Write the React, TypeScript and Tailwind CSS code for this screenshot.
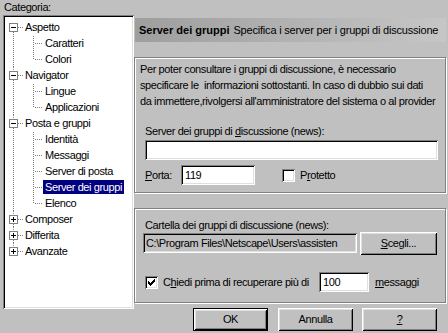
import React from 'react';

const sunken =
  'shadow-[inset_1px_1px_0_#808080,inset_-1px_-1px_0_#ffffff,inset_2px_2px_0_#000000,inset_-2px_-2px_0_#dfdfdf]';
const raised =
  'shadow-[inset_1px_1px_0_#ffffff,inset_-1px_-1px_0_#000000,inset_2px_2px_0_#dfdfdf,inset_-2px_-2px_0_#808080]';
const raisedDefault =
  'shadow-[inset_0_0_0_1px_#000000,inset_2px_2px_0_#ffffff,inset_-2px_-2px_0_#000000,inset_3px_3px_0_#dfdfdf,inset_-3px_-3px_0_#808080]';
const etched = 'border border-[#808080] shadow-[inset_1px_1px_0_#ffffff,1px_1px_0_#ffffff]';

type Item = {
  label: string;
  level: 0 | 1;
  box?: '+' | '-';
  first?: boolean;
  lastRoot?: boolean;
  lastChild?: boolean;
  selected?: boolean;
};

const items: Item[] = [
  { label: 'Aspetto', level: 0, box: '-', first: true },
  { label: 'Caratteri', level: 1 },
  { label: 'Colori', level: 1, lastChild: true },
  { label: 'Navigator', level: 0, box: '-' },
  { label: 'Lingue', level: 1 },
  { label: 'Applicazioni', level: 1, lastChild: true },
  { label: 'Posta e gruppi', level: 0, box: '-' },
  { label: 'Identità', level: 1 },
  { label: 'Messaggi', level: 1 },
  { label: 'Server di posta', level: 1 },
  { label: 'Server dei gruppi', level: 1, selected: true },
  { label: 'Elenco', level: 1, lastChild: true },
  { label: 'Composer', level: 0, box: '+' },
  { label: 'Differita', level: 0, box: '+' },
  { label: 'Avanzate', level: 0, box: '+', lastRoot: true },
];

const DOT = '#808080';

function Gutter({ it }: { it: Item }) {
  const w = it.level === 0 ? 18 : 38;
  return (
    <svg width={w} height={16} shapeRendering="crispEdges" className="shrink-0">
      {it.level === 0 ? (
        <>
          {!it.first && <line x1={8.5} y1={0} x2={8.5} y2={4} stroke={DOT} strokeDasharray="1 1" />}
          {!it.lastRoot && <line x1={8.5} y1={13} x2={8.5} y2={16} stroke={DOT} strokeDasharray="1 1" />}
          <line x1={13} y1={8.5} x2={18} y2={8.5} stroke={DOT} strokeDasharray="1 1" />
          <rect x={4.5} y={4.5} width={8} height={8} fill="#ffffff" stroke="#808080" />
          <line x1={6} y1={8.5} x2={11} y2={8.5} stroke="#000000" />
          {it.box === '+' && <line x1={8.5} y1={6} x2={8.5} y2={11} stroke="#000000" />}
        </>
      ) : (
        <>
          <line x1={8.5} y1={1} x2={8.5} y2={16} stroke={DOT} strokeDasharray="1 1" />
          <line x1={28.5} y1={1} x2={28.5} y2={it.lastChild ? 9 : 16} stroke={DOT} strokeDasharray="1 1" />
          <line x1={30} y1={8.5} x2={38} y2={8.5} stroke={DOT} strokeDasharray="1 1" />
        </>
      )}
    </svg>
  );
}

function U({ children }: { children: React.ReactNode }) {
  return <span className="underline underline-offset-[1px]">{children}</span>;
}

function Checkbox({ checked }: { checked?: boolean }) {
  return (
    <div className={`w-[13px] h-[13px] bg-white shrink-0 relative ${sunken}`}>
      {checked && (
        <svg width={13} height={13} className="absolute left-0 top-0" shapeRendering="crispEdges">
          <g fill="#000000">
            <rect x={9} y={3} width={1} height={1} />
            <rect x={8} y={4} width={2} height={1} />
            <rect x={3} y={5} width={1} height={1} />
            <rect x={7} y={5} width={3} height={1} />
            <rect x={3} y={6} width={2} height={1} />
            <rect x={6} y={6} width={3} height={1} />
            <rect x={3} y={7} width={5} height={1} />
            <rect x={4} y={8} width={3} height={1} />
            <rect x={5} y={9} width={1} height={1} />
          </g>
        </svg>
      )}
    </div>
  );
}

function Btn({ children, def, w = 'w-[75px]' }: { children: React.ReactNode; def?: boolean; w?: string }) {
  return (
    <div
      className={`${w} h-[23px] bg-[#c0c0c0] flex items-center justify-center shrink-0 ${def ? raisedDefault : raised}`}
    >
      {children}
    </div>
  );
}

export default function App() {
  return (
    <div className="w-[448px] h-[333px] bg-[#c0c0c0] overflow-hidden flex text-[11px] text-black font-['Liberation_Sans',Arial,sans-serif] tracking-[-0.4px] select-none">
      {/* Left column */}
      <div className="w-[134px] flex flex-col shrink-0">
        <div className="h-[15px] pl-[4px] leading-[14px]">Categoria:</div>
        <div className={`ml-[3px] w-[131px] h-[294px] bg-white pt-[4px] pl-[2px] ${sunken}`}>
          {items.map((it) => (
            <div key={it.label} className="h-[16px] flex items-center">
              <Gutter it={it} />
              <span
                className={`px-[2px] h-[14px] leading-[14px] whitespace-nowrap ${
                  it.selected ? 'bg-[#000080] text-white' : ''
                }`}
              >
                {it.label}
              </span>
            </div>
          ))}
        </div>
      </div>

      {/* Right column */}
      <div className="w-[314px] flex flex-col">
        <div className="mt-[18px] ml-[1px] w-[311px] h-[24px] flex items-center pl-[4px] bg-linear-to-r from-[#9e9e9e] to-[#c6c6c6] whitespace-nowrap">
          <span className="font-bold tracking-normal">Server dei gruppi</span>
          <span className="ml-[4px] tracking-[-0.2px]">Specifica i server per i gruppi di discussione</span>
        </div>

        {/* Group 1 */}
        <div className={`mt-[15px] w-[312px] h-[136px] flex flex-col ${etched}`}>
          <div className="mt-[3px] ml-[5px] leading-[16px] whitespace-pre">
            {'Per poter consultare i gruppi di discussione, è necessario\nspecificare le  informazioni sottostanti. In caso di dubbio sui dati\nda immettere,rivolgersi all\'amministratore del sistema o al provider'}
          </div>
          <div className="mt-[15px] ml-[10px] leading-[14px]">
            Server dei gruppi di <U>d</U>iscussione (news):
          </div>
          <div className={`mt-[2px] ml-[10px] w-[293px] h-[20px] bg-white ${sunken}`} />
          <div className="mt-[5px] ml-[10px] h-[20px] flex items-center">
            <span className="w-[36px]">
              <U>P</U>orta:
            </span>
            <div className={`w-[74px] h-[20px] bg-white flex items-center pl-[4px] ${sunken}`}>119</div>
            <div className="ml-[27px]">
              <Checkbox />
            </div>
            <span className="ml-[5px]">
              P<U>r</U>otetto
            </span>
          </div>
        </div>

        {/* Group 2 */}
        <div className={`mt-[15px] w-[312px] h-[95px] flex flex-col ${etched}`}>
          <div className="mt-[9px] ml-[10px] leading-[14px]">
            Cartella dei <U>g</U>ruppi di discussione (news):
          </div>
          <div className="mt-[-1px] ml-[8px] h-[24px] flex items-center">
            <div
              className={`w-[214px] h-[20px] bg-[#c0c0c0] flex items-center pl-[3px] overflow-hidden whitespace-nowrap ${sunken}`}
            >
              C:\Program Files\Netscape\Users\assisten
            </div>
            <div className="ml-[3px]">
              <Btn w="w-[77px]">
                <span>
                  <U>S</U>cegli...
                </span>
              </Btn>
            </div>
          </div>
          <div className="mt-[17px] ml-[10px] h-[20px] flex items-center">
            <Checkbox checked />
            <span className="ml-[5px] w-[156px] whitespace-nowrap">
              C<U>h</U>iedi prima di recuperare più di
            </span>
            <div className={`w-[50px] h-[20px] bg-white flex items-center pl-[4px] ${sunken}`}>100</div>
            <span className="ml-[6px]">
              <U>m</U>essaggi
            </span>
          </div>
        </div>

        {/* Buttons */}
        <div className="mt-[5px] ml-[59px] flex">
          <Btn def>OK</Btn>
          <div className="ml-[10px]">
            <Btn>Annulla</Btn>
          </div>
          <div className="ml-[9px]">
            <Btn>
              <U>?</U>
            </Btn>
          </div>
        </div>
      </div>
    </div>
  );
}
